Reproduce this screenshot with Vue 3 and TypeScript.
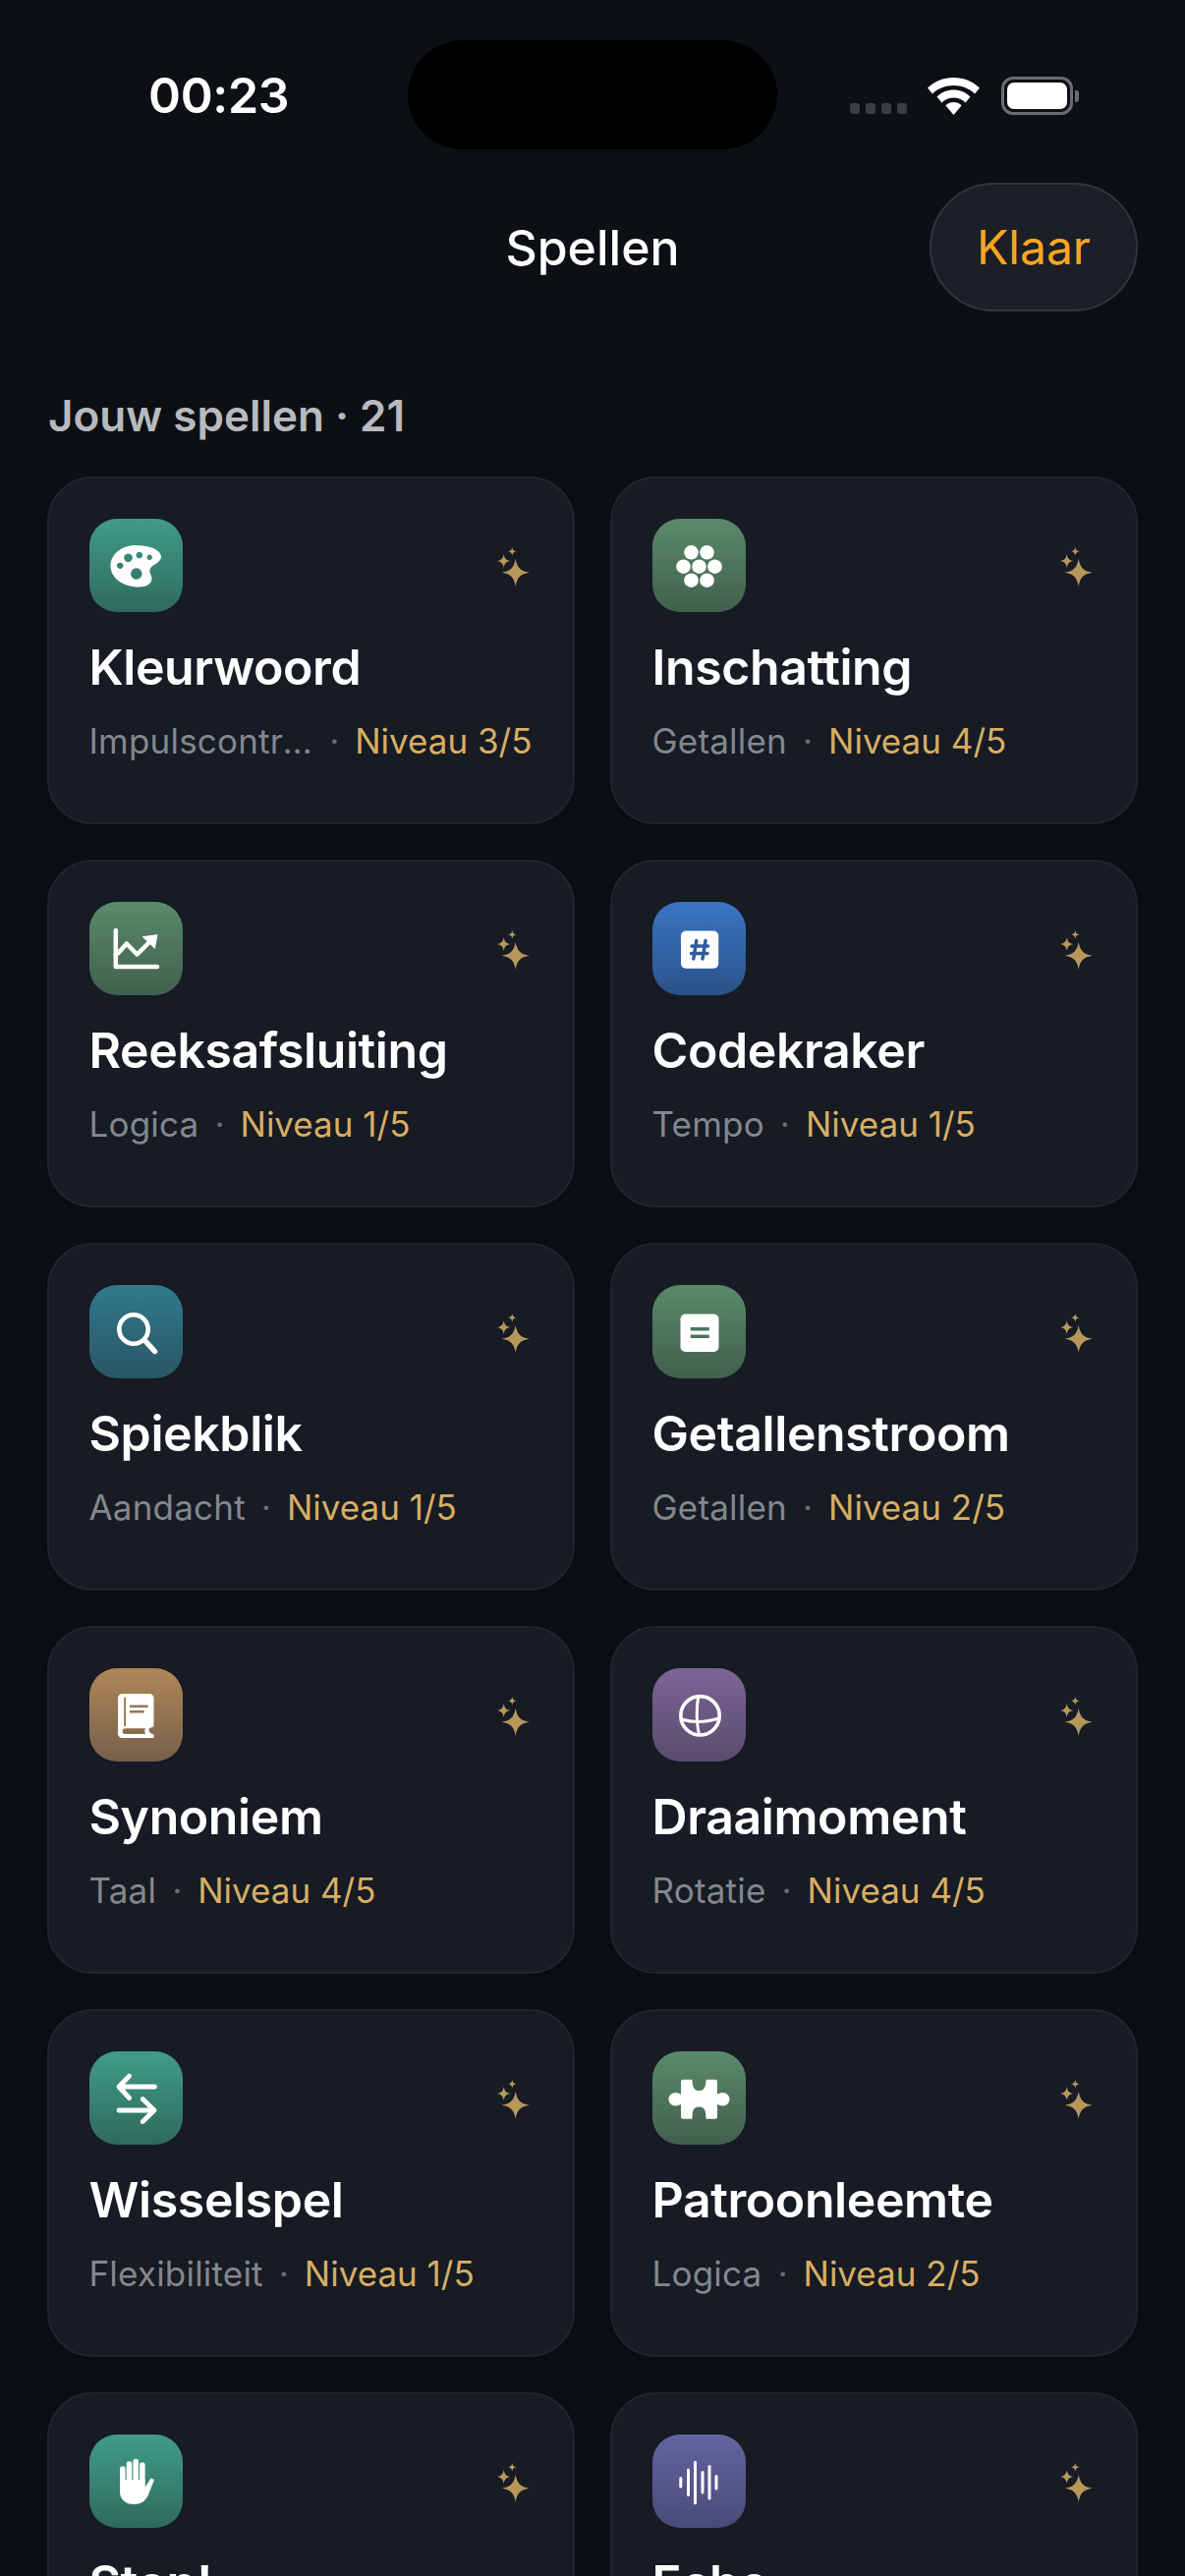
<template>
  <div class="screen">
    <div class="status">
      <span class="time">00:23</span>
      <div class="island"></div>
      <div class="status-icons">
        <div class="signal"><i></i><i></i><i></i><i></i></div>
        <svg class="wifi" width="53" height="38" viewBox="0 0 53 38">
          <path d="M26.5 0C16 0 7 4 0 10.5l5 6C10.5 11 18 8 26.5 8S42.5 11 48 16.5l5-6C46 4 37 0 26.5 0Z" fill="#fff" />
          <path d="M26.5 12.5c-6.5 0-12.500 2.500-17 7l5 6c3.200-3.200 7.300-5 12-5s8.800 1.800 12 5l5-6c-4.500-4.500-10.500-7-17-7Z" fill="#fff" />
          <path d="M26.500 25c-3.200 0-6 1.200-8.200 3.300L26.500 38l8.200-9.700C32.500 26.200 29.700 25 26.500 25Z" fill="#fff" />
        </svg>
        <div class="battery"><div class="battery-fill"></div></div>
        <div class="battery-cap"></div>
      </div>
    </div>

    <div class="nav">
      <span class="nav-title">Spellen</span>
      <button class="done">Klaar</button>
    </div>

    <div class="section-title">Jouw spellen · 21</div>

    <div class="grid">
      <div v-for="game in games" :key="game.name" class="card">
        <div class="card-top">
          <div class="icon" :class="game.tone">
            <svg width="95" height="95" viewBox="0 0 95 95">
              <template v-if="game.icon === 'palette'">
                <path
                  fill="#fff"
                  fill-rule="evenodd"
                  d="M47 27C60 27 73 31 73 39C73 45 62 47 61.500 52C61 56 63.500 57 63.500 61C63.500 66 58 69.500 50 69.500C34 69.500 21.500 60 21.500 48C21.500 36 33 27 47 27ZM47.800 50.300a5.700 5.700 0 1 0 .01 0ZM39.500 35.400a4.300 4.300 0 1 0 .01 0ZM50.800 33.700a3.300 3.300 0 1 0 .01 0ZM61.200 36.600a2.700 2.700 0 1 0 .01 0ZM31.200 44.400a3.300 3.300 0 1 0 .01 0Z"
                />
              </template>
              <template v-else-if="game.icon === 'dots'">
                <circle v-for="d in dots" :key="d[0] + '-' + d[1]" :cx="d[0]" :cy="d[1]" r="7.300" fill="#fff" />
              </template>
              <template v-else-if="game.icon === 'chart'">
                <path d="M26.800 29V66H69" class="line" stroke-width="4.500" />
                <path d="M29.500 52L37.800 42.500L48.500 53.500L60 42" class="line" stroke-width="4.500" />
                <path d="M53.500 35.300L69.500 33L66.800 48Z" fill="#fff" />
              </template>
              <template v-else-if="game.icon === 'hash'">
                <rect x="29" y="29.500" width="38.200" height="38.200" rx="5" fill="#fff" />
                <path d="M44.800 39.500L41.800 58M54 39.500L51 58M40 45H56.500M39.500 52.500H56" fill="none" stroke="#2f5c9c" stroke-width="3.500" stroke-linecap="round" />
              </template>
              <template v-else-if="game.icon === 'search'">
                <circle cx="45" cy="45" r="14.700" fill="none" stroke="#fff" stroke-width="4.600" />
                <path d="M56.500 56.500L66.500 67.500" class="line" stroke-width="5.500" />
              </template>
              <template v-else-if="game.icon === 'doc'">
                <path
                  fill="#fff"
                  fill-rule="evenodd"
                  d="M33.500 29.500H62.500a5 5 0 0 1 5 5V63a5 5 0 0 1-5 5H33.500a5 5 0 0 1-5-5V34.500a5 5 0 0 1 5-5ZM38.700 43V46.500H57.800V43ZM38.700 50.500V54H57.800V50.500Z"
                />
              </template>
              <template v-else-if="game.icon === 'book'">
                <path
                  fill="#fff"
                  fill-rule="evenodd"
                  d="M33.500 26H61a4.500 4.500 0 0 1 4.500 4.500V58C65.500 60 63 60.500 61 61C60 63 60.500 66 65.500 67.500V71H33.500a4.500 4.500 0 0 1-4.500-4.500V30.500a4.500 4.500 0 0 1 4.500-4.500ZM35.200 29.800V59.200H37V29.800ZM41 37.400V40H59.600V37.400ZM41 43V45.600H55.600V43ZM36.500 61.200a2.800 2.800 0 0 0 0 5.800H57C56 65 56 63 57 61.200Z"
                />
              </template>
              <template v-else-if="game.icon === 'globe'">
                <circle cx="48.500" cy="48.300" r="19.700" fill="none" stroke="#fff" stroke-width="3.600" />
                <path d="M46.500 29Q43.500 50 47.500 68M29.500 52Q47 57.500 67.500 51" fill="none" stroke="#fff" stroke-width="3" />
              </template>
              <template v-else-if="game.icon === 'arrows'">
                <path d="M66.500 36H30M40.600 25L30 36L40.600 47.500" class="line" stroke-width="4.800" />
                <path d="M30 60H66M54.200 48.500L66 60L54.200 71.500" class="line" stroke-width="4.800" />
              </template>
              <template v-else-if="game.icon === 'puzzle'">
                <path
                  fill="#fff"
                  d="M31 28.700H40.500C40.500 33 41 40 47.500 40C54 40 54.500 33 54.500 28.700H64a2 2 0 0 1 2 2V43.500C67.500 43.500 68.500 42 71.500 42C75.500 42 78.500 45 78.500 48.700C78.500 52.400 75.500 55.400 71.500 55.400C68.500 55.400 67.500 54 66 54V66.700a2 2 0 0 1-2 2H54.500C54.500 62 54 56.500 47.500 56.500C41 56.500 40.500 62 40.500 68.700H31a2 2 0 0 1-2-2V54C27.500 54 26.500 55.400 23.500 55.400C19.500 55.400 16.500 52.400 16.500 48.700C16.500 45 19.500 42 23.500 42C26.500 42 27.500 43.500 29 43.500V30.700a2 2 0 0 1 2-2Z"
                />
              </template>
              <template v-else-if="game.icon === 'hand'">
                <path d="M33.800 35V52M40.500 30V50M47.200 27.500V50M53.800 31V52" class="line" stroke-width="5.600" />
                <path d="M31 46H56.500V54L62.500 44.500L66 46L60.500 60C58 67 53 71 45.500 71C36.500 71 31 66 31 58Z" fill="#fff" />
              </template>
              <template v-else-if="game.icon === 'wave'">
                <path d="M28.800 44.500V53M36.500 36V61.500M43.500 28.200V69.800M51 38.500V59M58 32.500V65M65 42.500V55" class="line" stroke-width="3" />
              </template>
            </svg>
          </div>
          <svg class="sparkle" width="38" height="40" viewBox="0 0 38 40">
            <path :d="star(19.7, 25.7, 14)" fill="#b8975a" />
            <path :d="star(7.7, 14, 7)" fill="#b8975a" />
            <path :d="star(16.3, 4.300, 4.300)" fill="#b8975a" />
          </svg>
        </div>
        <div class="card-title">{{ game.name }}</div>
        <div class="card-sub">
          <span class="category">{{ game.category }}</span>
          <span class="sep">·</span>
          <span class="level">Niveau {{ game.level }}/5</span>
        </div>
      </div>
    </div>
  </div>
</template>

<script setup lang="ts">
interface Game {
  name: string;
  category: string;
  level: number;
  icon: string;
  tone: string;
}

const games: Game[] = [
  { name: 'Kleurwoord', category: 'Impulscontrole', level: 3, icon: 'palette', tone: 'teal' },
  { name: 'Inschatting', category: 'Getallen', level: 4, icon: 'dots', tone: 'green' },
  { name: 'Reeksafsluiting', category: 'Logica', level: 1, icon: 'chart', tone: 'green' },
  { name: 'Codekraker', category: 'Tempo', level: 1, icon: 'hash', tone: 'blue' },
  { name: 'Spiekblik', category: 'Aandacht', level: 1, icon: 'search', tone: 'ocean' },
  { name: 'Getallenstroom', category: 'Getallen', level: 2, icon: 'doc', tone: 'green' },
  { name: 'Synoniem', category: 'Taal', level: 4, icon: 'book', tone: 'brown' },
  { name: 'Draaimoment', category: 'Rotatie', level: 4, icon: 'globe', tone: 'purple' },
  { name: 'Wisselspel', category: 'Flexibiliteit', level: 1, icon: 'arrows', tone: 'teal' },
  { name: 'Patroonleemte', category: 'Logica', level: 2, icon: 'puzzle', tone: 'green' },
  { name: 'Stop!', category: 'Impulscontrole', level: 2, icon: 'hand', tone: 'teal' },
  { name: 'Echo', category: 'Geheugen', level: 2, icon: 'wave', tone: 'indigo' },
];

const dots: number[][] = [
  [39.5, 34.3],
  [55.5, 34.3],
  [31.5, 48.7],
  [47.5, 48.7],
  [63.5, 48.7],
  [39.5, 62.7],
  [55.5, 62.7],
];

// four point star, slightly fat in the middle
const star = (x: number, y: number, r: number): string => {
  const a = r * 0.12;
  const b = r * 0.34;
  return [
    `M${x} ${y - r}`,
    `C${x + a} ${y - b} ${x + b} ${y - a} ${x + r} ${y}`,
    `C${x + b} ${y + a} ${x + a} ${y + b} ${x} ${y + r}`,
    `C${x - a} ${y + b} ${x - b} ${y + a} ${x - r} ${y}`,
    `C${x - b} ${y - a} ${x - a} ${y - b} ${x} ${y - r}Z`,
  ].join('');
};
</script>

<style scoped>
.screen {
  width: 1206px;
  height: 2622px;
  overflow: hidden;
  background: #0c1015;
  font-family: Inter, 'Liberation Sans', sans-serif;
  color: #fff;
}

.status {
  height: 152px;
  padding-top: 41px;
  box-sizing: border-box;
  display: flex;
  align-items: flex-start;
}

.time {
  width: 415px;
  padding-left: 151px;
  box-sizing: border-box;
  margin-top: 28px;
  font-size: 50px;
  line-height: 56px;
  font-weight: 600;
  letter-spacing: -0.3px;
}

.island {
  width: 376px;
  height: 111px;
  border-radius: 56px;
  background: #000;
}

.status-icons {
  margin-left: 74px;
  margin-top: 37px;
  display: flex;
  align-items: center;
  height: 39px;
}

.signal {
  display: flex;
  gap: 6px;
  align-self: flex-end;
  margin-bottom: 1px;
}

.signal i {
  width: 10px;
  height: 11px;
  border-radius: 3px;
  background: #3b3d41;
}

.wifi {
  margin-left: 21px;
}

.battery {
  margin-left: 22px;
  width: 73px;
  height: 39px;
  box-sizing: border-box;
  border: 3px solid #6a6c70;
  border-radius: 12px;
  padding: 3px;
}

.battery-fill {
  height: 100%;
  background: #fff;
  border-radius: 7px;
}

.battery-cap {
  width: 4px;
  height: 12px;
  margin-left: 2px;
  background: #6a6c70;
  border-radius: 0 3px 3px 0;
}

.nav {
  height: 131px;
  margin-top: 34px;
  padding-right: 48px;
  display: flex;
  align-items: center;
  justify-content: flex-end;
  position: relative;
}

.nav-title {
  position: absolute;
  left: 0;
  right: 0;
  text-align: center;
  font-size: 50px;
  font-weight: 500;
}

.done {
  width: 212px;
  height: 131px;
  border-radius: 66px;
  border: 2px solid #2f3540;
  background: #1b1f27;
  color: #f5a623;
  font-family: inherit;
  font-size: 48px;
  font-weight: 400;
  padding: 0;
}

.section-title {
  margin-top: 80px;
  padding-left: 49px;
  height: 53px;
  font-size: 44px;
  line-height: 53px;
  font-weight: 600;
  color: #b8babd;
}

.grid {
  margin-top: 35px;
  padding: 0 48px;
  display: grid;
  grid-template-columns: 537px 537px;
  grid-auto-rows: 354px;
  gap: 36px;
}

.card {
  box-sizing: border-box;
  padding: 41px 41.5px 0 40.5px;
  background: #161b24;
  border: 2px solid #20242c;
  border-radius: 46px;
  box-shadow: 0 2px 14px rgba(0, 0, 0, 0.3);
  min-width: 0;
}

.card-top {
  display: flex;
  align-items: center;
  justify-content: space-between;
}

.icon {
  width: 95px;
  height: 95px;
  border-radius: 28px;
}

.icon svg {
  display: block;
}

.line {
  fill: none;
  stroke: #fff;
  stroke-linecap: round;
  stroke-linejoin: round;
}

.teal {
  background: linear-gradient(#409c87, #2f6a5c);
}

.green {
  background: linear-gradient(#5a8a6a, #425f4e);
}

.blue {
  background: linear-gradient(#3a75c4, #2b5288);
}

.ocean {
  background: linear-gradient(#2f7a8c, #2a5565);
}

.brown {
  background: linear-gradient(#b08658, #75604a);
}

.purple {
  background: linear-gradient(#7d6497, #594c6c);
}

.indigo {
  background: linear-gradient(#6464a0, #4a4a78);
}

.sparkle {
  margin-top: 3px;
  margin-right: -1.5px;
}

.card-title {
  margin-top: 26px;
  font-size: 50px;
  line-height: 60px;
  font-weight: 600;
  letter-spacing: -0.4px;
  white-space: nowrap;
}

.card-sub {
  margin-top: 23px;
  display: flex;
  align-items: baseline;
  font-size: 35px;
  line-height: 44px;
  white-space: nowrap;
}

.category {
  color: #84878d;
  letter-spacing: 0.2px;
  min-width: 0;
  overflow: hidden;
  text-overflow: ellipsis;
}

.sep {
  flex: none;
  margin: 0 16px;
  color: #6a6d73;
}

.level {
  flex: none;
  color: #d8ae62;
}
</style>

<style>
html,
body {
  background: #0c1015;
}
</style>
